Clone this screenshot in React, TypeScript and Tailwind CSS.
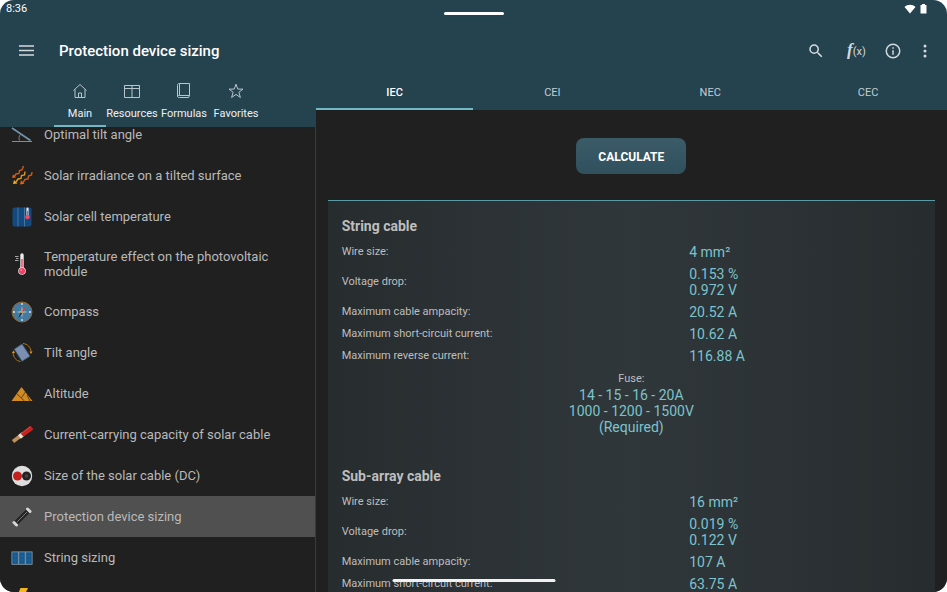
import React, { useState } from "react";

// drawings of the calculator list
const TiltLineIcon = () => (
  <svg viewBox="0 0 22 22" className="w-full h-full" fill="none">
    <path d="M1 17.500H21" stroke="#8b8b8b" strokeWidth="1" />
    <path d="M1 4L19.500 16.500" stroke="#6f94ae" strokeWidth="1.600" />
    <path d="M8.500 16.500C7.500 14 8 12 9.500 10.500" stroke="#9a9a9a" strokeWidth="0.800" />
  </svg>
);

const RaysIcon = () => (
  <svg viewBox="0 0 22 22" className="w-full h-full" fill="none" strokeWidth="1.400">
    <path d="M12.500 1L11 5L8.500 5.500L8 8.500L5 9L3 12" stroke="#cf5a14" />
    <path d="M1 12.800L2 9.500L5 12.500Z" fill="#e8640c" />
    <path d="M14 6.500L13.500 10L10.500 10.500L10 13.500L7 14L5 17" stroke="#dd9a1c" />
    <path d="M2 19L3 15L6.500 18.500Z" fill="#f2a91c" />
    <path d="M21 7L20.500 10L17.500 11L17 14L14 14.500L12 17.500" stroke="#cf5a14" />
    <path d="M9 19.500L10 15.500L13.500 18.800Z" fill="#e8640c" />
  </svg>
);

const CellIcon = () => (
  <svg viewBox="0 0 22 22" className="w-full h-full">
    <rect x="1.500" y="1.500" width="19" height="19" rx="2" fill="#124a80" />
    <path d="M7 1.500V20.500M13.500 1.500V20.500" stroke="#587fa5" strokeWidth="0.800" />
    <path d="M16.500 2.500V10" stroke="#e6e0e4" strokeWidth="2.200" strokeLinecap="round" />
    <path d="M16.500 5V10" stroke="#e84a66" strokeWidth="1.200" />
    <circle cx="16.500" cy="11" r="2.300" fill="#f0486a" />
  </svg>
);

const ThermometerIcon = () => (
  <svg viewBox="0 0 22 22" className="w-full h-full">
    <path d="M4 3.500H7.500M5 5.500H7.500M4 7.500H7.500" stroke="#b9b9b9" strokeWidth="0.900" />
    <path d="M11 2V17" stroke="#ecebed" strokeWidth="3.400" strokeLinecap="round" />
    <path d="M11 6V17" stroke="#ef4b66" strokeWidth="1.500" />
    <circle cx="11" cy="18" r="3.800" fill="#f3dde1" />
    <circle cx="11" cy="18" r="3.100" fill="#f23f62" />
    <circle cx="10.200" cy="17.200" r="0.900" fill="#f991a5" />
  </svg>
);

const CompassIcon = () => (
  <svg viewBox="0 0 22 22" className="w-full h-full">
    <circle cx="11" cy="11" r="10" fill="#457ba0" stroke="#9a6426" strokeWidth="1" />
    <path d="M11 5L11.800 10.200L17 11L11.800 11.800L11 17L10.200 11.800L5 11L10.200 10.200Z" fill="#b9cfdc" />
    <path d="M11 2V4M11 18V20M2 11H4M18 11H20" stroke="#dbe6ee" strokeWidth="1.300" />
    <path d="M15 5L12 11.600L10.200 10.600Z" fill="#e0402c" />
    <path d="M7 17.500L10.200 10.600L12 11.600Z" fill="#1c2c38" />
    <circle cx="11" cy="11" r="1.200" fill="#e0952c" />
  </svg>
);

const RotateIcon = () => (
  <svg viewBox="0 0 22 22" className="w-full h-full" fill="none">
    <rect x="6.500" y="3.500" width="9.500" height="14.500" rx="0.500" transform="rotate(-33 11 11)" fill="#7c8fb2" stroke="#34576b" strokeWidth="0.800" />
    <path d="M12 1.500C16.500 2 20 5.500 20 9.500" stroke="#b8741a" strokeWidth="1" />
    <path d="M2.200 11C2.200 15.500 5.500 19 9.500 19.500" stroke="#b8741a" strokeWidth="1" />
    <path d="M18.500 9.500H21.500L20 12ZM1 11H4L2.400 8.500Z" fill="#ee9a1c" />
  </svg>
);

const AltitudeIcon = () => (
  <svg viewBox="0 0 22 22" className="w-full h-full">
    <path d="M10.500 4L17 12.500L21.500 18H0.500Z" fill="#d28a25" />
    <path d="M5.500 10.500L13.500 18M14.500 9L10.500 14.500M16 12L19 18" stroke="#4f3815" strokeWidth="0.900" fill="none" />
  </svg>
);

const WireIcon = () => (
  <svg viewBox="0 0 22 22" className="w-full h-full">
    <path d="M2 17.500L10 11.500" stroke="#c1925f" strokeWidth="3.800" />
    <path d="M8.500 13L12 10" stroke="#e9e2dc" strokeWidth="4.400" />
    <path d="M11 11L21 3.500" stroke="#c5231d" strokeWidth="4.600" />
    <path d="M10.500 9.500L19 2.800" stroke="#e4524a" strokeWidth="0.800" />
  </svg>
);

const CableSectionIcon = () => (
  <svg viewBox="0 0 22 22" className="w-full h-full">
    <circle cx="11" cy="11" r="10.200" fill="#dedede" />
    <circle cx="6.500" cy="11" r="4.500" fill="#c71f1c" />
    <circle cx="15.500" cy="11" r="4.500" fill="#222222" />
    <circle cx="15.500" cy="11" r="1.800" fill="#424242" />
  </svg>
);

const FuseIcon = () => (
  <svg viewBox="0 0 22 22" className="w-full h-full">
    <path d="M4.500 17.500L17.500 4.500" stroke="#242424" strokeWidth="4.600" />
    <path d="M6 16L16 6" stroke="#828282" strokeWidth="0.900" />
    <path d="M3 16.500L5.500 19M16.500 3L19 5.500" stroke="#d6d6d6" strokeWidth="3" strokeLinecap="round" />
  </svg>
);

const PanelsIcon = () => (
  <svg viewBox="0 0 22 22" className="w-full h-full" stroke="#8b9fae" strokeWidth="0.800">
    <rect x="0.900" y="4.900" width="6.400" height="12.400" fill="#14558c" />
    <rect x="7.800" y="4.900" width="6.400" height="12.400" fill="#14558c" />
    <rect x="14.700" y="4.900" width="6.400" height="12.400" fill="#14558c" />
    <path d="M1 9H21M1 13H21M4 5V17M11 5V17M18 5V17" stroke="#2f6f9f" strokeWidth="0.500" />
  </svg>
);

const BoltIcon = () => (
  <svg viewBox="0 0 22 22" className="w-full h-full">
    <path d="M9.500 0H17L13.500 7H18L7 21L10 11H5Z" fill="#f8b51c" />
  </svg>
);

const calculators = [
  { id: 1, name: "Optimal tilt angle", icon: <TiltLineIcon /> },
  { id: 2, name: "Solar irradiance on a tilted surface", icon: <RaysIcon /> },
  { id: 3, name: "Solar cell temperature", icon: <CellIcon /> },
  { id: 4, name: "Temperature effect on the photovoltaic module", icon: <ThermometerIcon /> },
  { id: 5, name: "Compass", icon: <CompassIcon /> },
  { id: 6, name: "Tilt angle", icon: <RotateIcon /> },
  { id: 7, name: "Altitude", icon: <AltitudeIcon /> },
  { id: 8, name: "Current-carrying capacity of solar cable", icon: <WireIcon /> },
  { id: 9, name: "Size of the solar cable (DC)", icon: <CableSectionIcon /> },
  { id: 10, name: "Protection device sizing", icon: <FuseIcon /> },
  { id: 11, name: "String sizing", icon: <PanelsIcon /> },
  { id: 12, name: "", icon: <BoltIcon /> },
];

const sections = [
  {
    name: "Main",
    icon: <path d="M1.500 7.500L8 1.500L14.500 7.500M3 6.500V14.500H13V6.500M6.500 14.500V10H9.500V14.500" />,
  },
  {
    name: "Resources",
    icon: <path d="M0.500 2.500H15.500V14.500H0.500ZM8 2.500V14.500M0.500 5.500H15.500" />,
  },
  {
    name: "Formulas",
    icon: <path d="M3.500 0.500H13.500V12.500L12.500 14.500H3.500C2 14.500 1.500 14 1.500 13V2.500C1.500 1 2 0.500 3.500 0.500ZM3.500 0.500V12.500M13.500 12.500H3.500C2.500 12.500 1.500 12.500 1.500 13.500" />,
  },
  {
    name: "Favorites",
    icon: <path d="M8 1.200L9.800 6.100H15L10.900 9.300L12.400 14.500L8 11.400L3.600 14.500L5.100 9.300L1 6.100H6.200Z" />,
  },
];

const standards = ["IEC", "CEI", "NEC", "CEC"];

const results = [
  {
    title: "String cable",
    rows: [
      { label: "Wire size:", values: ["4 mm²"] },
      { label: "Voltage drop:", values: ["0.153 %", "0.972 V"] },
      { label: "Maximum cable ampacity:", values: ["20.52 A"] },
      { label: "Maximum short-circuit current:", values: ["10.62 A"] },
      { label: "Maximum reverse current:", values: ["116.88 A"] },
    ],
    fuse: ["14 - 15 - 16 - 20A", "1000 - 1200 - 1500V", "(Required)"],
  },
  {
    title: "Sub-array cable",
    rows: [
      { label: "Wire size:", values: ["16 mm²"] },
      { label: "Voltage drop:", values: ["0.019 %", "0.122 V"] },
      { label: "Maximum cable ampacity:", values: ["107 A"] },
      { label: "Maximum short-circuit current:", values: ["63.75 A"] },
    ],
    fuse: [],
  },
];

const Header = () => (
  <header className="shrink-0">
    <div className="h-[18px] pl-[6px] pr-5 flex items-center justify-between text-[11px] text-white">
      <span>8:36</span>
      <div className="flex items-center gap-1">
        <svg viewBox="0 0 12 10" className="w-3 h-[10px]" fill="#ffffff">
          <path d="M6 9.500L0.500 3C3.500 0 8.500 0 11.500 3Z" />
        </svg>
        <svg viewBox="0 0 7 10" className="w-[7px] h-[10px]" fill="#ffffff">
          <path d="M2 0H5V1H6.500V9.500H0.500V1H2Z" />
        </svg>
      </div>
    </div>
    <div className="h-14 pt-[10px] pl-[19px] pr-4 flex items-center text-[#d3dadd]">
      <button aria-label="Menu" className="-mt-[2px]">
        <svg viewBox="0 0 15 11" className="w-[15px] h-[11px]" stroke="currentColor" strokeWidth="1.500">
          <path d="M0 1H15M0 5.500H15M0 10H15" />
        </svg>
      </button>
      <h1 className="ml-[25px] flex-1 text-[15px] font-medium text-white">
        Protection device sizing
      </h1>
      <button aria-label="Search">
        <svg viewBox="0 0 24 24" className="w-[18px] h-[18px]" fill="currentColor">
          <path d="M15.500 14h-.79l-.28-.27A6.470 6.470 0 0 0 16 9.500 6.500 6.500 0 1 0 9.500 16c1.610 0 3.090-.59 4.230-1.570l.27.28v.79l5 4.990L20.490 19l-4.990-5zm-6 0C7.010 14 5 11.990 5 9.500S7.010 5 9.500 5 14 7.010 14 9.500 11.990 14 9.500 14z" />
        </svg>
      </button>
      <button aria-label="Formula" className="ml-[22px] w-[17px] leading-4 whitespace-nowrap flex items-baseline">
        <span className="text-[17px] italic font-bold font-['Liberation_Serif',serif]">f</span>
        <span className="text-[11px]">(x)</span>
      </button>
      <button aria-label="Info" className="ml-5">
        <svg viewBox="0 0 24 24" className="w-[18px] h-[18px]" fill="currentColor">
          <path d="M11 7h2v2h-2zm0 4h2v6h-2zm1-9a10 10 0 1 0 0 20 10 10 0 0 0 0-20zm0 18a8 8 0 1 1 0-16 8 8 0 0 1 0 16z" />
        </svg>
      </button>
      <button aria-label="More" className="ml-[17px]">
        <svg viewBox="0 0 12 16" className="w-3 h-4" fill="currentColor">
          <circle cx="6" cy="3" r="1.500" />
          <circle cx="6" cy="8" r="1.500" />
          <circle cx="6" cy="13" r="1.500" />
        </svg>
      </button>
    </div>
  </header>
);

const Sidebar = () => {
  const [section, setSection] = useState("Main");
  const [selected, setSelected] = useState(10);

  return (
    <aside className="w-1/3 shrink-0 flex flex-col border-r border-[#383b3c]">
      <nav className="h-[53px] shrink-0 pl-[54px] flex bg-[#25424f]">
        {sections.map((item) => (
          <button
            key={item.name}
            onClick={() => setSection(item.name)}
            className={`w-[52px] shrink-0 pt-[9px] flex flex-col items-center gap-2 text-[11px] leading-[14px] text-[#eef1f2] border-b-2 ${
              section === item.name ? "border-[#6fbac4]" : "border-transparent"
            }`}
          >
            <svg viewBox="0 0 16 16" className="w-4 h-4 shrink-0" fill="none" stroke="#b9c6cc" strokeWidth="1">
              {item.icon}
            </svg>
            {item.name}
          </button>
        ))}
      </nav>
      <div className="flex-1 min-h-0 overflow-hidden">
        <ul className="-mt-[13px]">
          {calculators.map((item) => (
            <li key={item.id}>
              <button
                aria-label={item.name || "Short circuit"}
                onClick={() => setSelected(item.id)}
                className={`w-full min-h-[41px] py-3 pl-[11px] pr-10 flex items-center gap-[11px] text-left text-[13px] leading-[15px] text-[#b9b9b9] ${
                  selected === item.id ? "bg-[#505050]" : ""
                }`}
              >
                <span className="w-[22px] h-[22px] -my-1 shrink-0">{item.icon}</span>
                <span>{item.name}</span>
              </button>
            </li>
          ))}
        </ul>
      </div>
    </aside>
  );
};

const Results = () => (
  <div className="mx-3 px-[14px] pt-[18px] flex-1 border-t border-[#5a9ba6] bg-linear-to-r from-[#272c2f] via-[#30373a] to-[#272c2f]">
    {results.map((result) => (
      <section key={result.title} className="mb-[34px]">
        <h2 className="mb-2 text-[14px] leading-[14px] font-bold text-[#bebebe]">{result.title}</h2>
        <table className="w-full table-fixed text-left">
          <tbody>
            {result.rows.map((row) => (
              <tr key={row.label}>
                <th scope="row" className="w-3/5 py-[3px] text-[11px] leading-4 font-normal text-[#bebebe]">
                  {row.label}
                </th>
                <td className="py-[3px] text-[14px] leading-4 text-[#7cc3cd]">
                  {row.values.map((value) => (
                    <div key={value}>{value}</div>
                  ))}
                </td>
              </tr>
            ))}
          </tbody>
        </table>
        {result.fuse.length > 0 && (
          <div className="pt-1 text-center text-[14px] leading-4 text-[#7cc3cd]">
            <p className="text-[11px] leading-4 text-[#bebebe]">Fuse:</p>
            {result.fuse.map((line) => (
              <p key={line}>{line}</p>
            ))}
          </div>
        )}
      </section>
    ))}
  </div>
);

const App = () => {
  const [standard, setStandard] = useState("IEC");

  return (
    <div className="bg-white">
      <div className="relative h-screen overflow-hidden rounded-[14px] flex flex-col bg-[#25424f] font-[Roboto,sans-serif]">
        <Header />
        <div className="flex-1 min-h-0 flex bg-[#202020]">
          <Sidebar />
          <main className="flex-1 min-w-0 overflow-hidden flex flex-col">
            <div className="h-9 shrink-0 grid grid-cols-4 bg-[#25424f]">
              {standards.map((name) => (
                <button
                  key={name}
                  onClick={() => setStandard(name)}
                  className={`pt-1 text-[11px] border-b-2 ${
                    standard === name
                      ? "text-white font-medium border-[#6fbac4]"
                      : "text-[#c3cdd1] border-transparent"
                  }`}
                >
                  {name}
                </button>
              ))}
            </div>
            <button className="mt-7 mb-[26px] pt-px w-[110px] h-9 shrink-0 self-center rounded-lg bg-linear-to-b from-[#3c5b69] to-[#30505e] text-[12px] font-bold text-white">
              CALCULATE
            </button>
            <Results />
          </main>
        </div>
        {/* system handles */}
        <div className="absolute top-3 left-1/2 -translate-x-1/2 w-[60px] h-[3px] rounded-full bg-white" />
        <div className="absolute bottom-[10px] left-1/2 -translate-x-1/2 w-[163px] h-[3px] rounded-full bg-[#f1f1f1]" />
      </div>
    </div>
  );
};

export default App;
